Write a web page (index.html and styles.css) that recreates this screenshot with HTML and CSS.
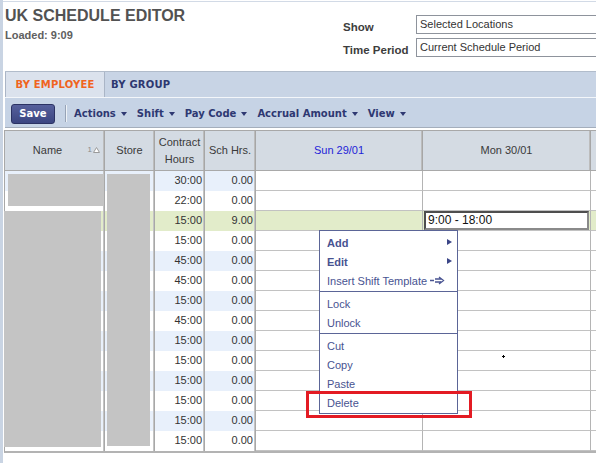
FILE: index.html
```html
<!DOCTYPE html>
<html>
<head>
<meta charset="utf-8">
<title>UK Schedule Editor</title>
<link rel="stylesheet" href="styles.css">
</head>
<body>
<div class="page">
  <div class="topline"></div>
  <header class="head">
    <div class="titles">
      <h1 class="title">UK SCHEDULE EDITOR</h1>
      <div class="loaded">Loaded: 9:09</div>
    </div>
    <div class="filters">
      <div class="frow"><span class="flabel">Show</span><div class="box">Selected Locations</div></div>
      <div class="frow"><span class="flabel">Time Period</span><div class="box">Current Schedule Period</div></div>
    </div>
  </header>

  <nav class="tabs">
    <div class="tab active">BY EMPLOYEE</div>
    <div class="tab">BY GROUP</div>
  </nav>

  <div class="toolbar">
    <button class="save">Save</button>
    <span class="tsep"></span>
    <span class="tmenu">Actions<i class="caret"></i></span>
    <span class="tmenu">Shift<i class="caret"></i></span>
    <span class="tmenu">Pay Code<i class="caret"></i></span>
    <span class="tmenu">Accrual Amount<i class="caret"></i></span>
    <span class="tmenu">View<i class="caret"></i></span>
  </div>

  <div class="grid">
    <div class="hrow">
      <div class="h hname">Name<span class="sort">1<svg width="7" height="6" viewBox="0 0 7 6"><path d="M3.5 0.5 L6.5 5.5 L0.5 5.5 Z" fill="#fff" stroke="#9a9a9a" stroke-width="1"/></svg></span></div>
      <div class="h">Store</div>
      <div class="h">Contract<br>Hours</div>
      <div class="h">Sch Hrs.</div>
      <div class="h today">Sun 29/01</div>
      <div class="h">Mon 30/01</div>
      <div class="h"></div>
    </div>
    <div class="row odd"><div class="c"></div><div class="c"></div><div class="c n">30:00</div><div class="c n">0.00</div><div class="d"></div><div class="d"></div><div class="d"></div></div>
    <div class="row"><div class="c"></div><div class="c"></div><div class="c n">22:00</div><div class="c n">0.00</div><div class="d"></div><div class="d"></div><div class="d"></div></div>
    <div class="row sel"><div class="c"></div><div class="c"></div><div class="c n">15:00</div><div class="c n">9.00</div><div class="d"></div><div class="d"><div class="edit">9:00 - 18:00</div></div><div class="d"></div></div>
    <div class="row"><div class="c"></div><div class="c"></div><div class="c n">15:00</div><div class="c n">0.00</div><div class="d"></div><div class="d"></div><div class="d"></div></div>
    <div class="row odd"><div class="c"></div><div class="c"></div><div class="c n">45:00</div><div class="c n">0.00</div><div class="d"></div><div class="d"></div><div class="d"></div></div>
    <div class="row"><div class="c"></div><div class="c"></div><div class="c n">45:00</div><div class="c n">0.00</div><div class="d"></div><div class="d"></div><div class="d"></div></div>
    <div class="row odd"><div class="c"></div><div class="c"></div><div class="c n">15:00</div><div class="c n">0.00</div><div class="d"></div><div class="d"></div><div class="d"></div></div>
    <div class="row"><div class="c"></div><div class="c"></div><div class="c n">45:00</div><div class="c n">0.00</div><div class="d"></div><div class="d"></div><div class="d"></div></div>
    <div class="row odd"><div class="c"></div><div class="c"></div><div class="c n">15:00</div><div class="c n">0.00</div><div class="d"></div><div class="d"></div><div class="d"></div></div>
    <div class="row"><div class="c"></div><div class="c"></div><div class="c n">15:00</div><div class="c n">0.00</div><div class="d"></div><div class="d"></div><div class="d"></div></div>
    <div class="row odd"><div class="c"></div><div class="c"></div><div class="c n">15:00</div><div class="c n">0.00</div><div class="d"></div><div class="d"></div><div class="d"></div></div>
    <div class="row"><div class="c"></div><div class="c"></div><div class="c n">15:00</div><div class="c n">0.00</div><div class="d"></div><div class="d"></div><div class="d"></div></div>
    <div class="row odd"><div class="c"></div><div class="c"></div><div class="c n">15:00</div><div class="c n">0.00</div><div class="d"></div><div class="d"></div><div class="d"></div></div>
    <div class="row"><div class="c"></div><div class="c"></div><div class="c n">15:00</div><div class="c n">0.00</div><div class="d"></div><div class="d"></div><div class="d"></div></div>
  </div>

  <div class="redact r1"></div>
  <div class="redact r2"></div>
  <div class="redact r3"></div>

  <div class="ctx">
    <div class="item bold">Add<i class="sub"></i></div>
    <div class="item bold">Edit<i class="sub"></i></div>
    <div class="item">Insert Shift Template<svg class="tpl" width="16" height="9" viewBox="0 0 16 9"><path d="M0 4.5 H4 M5 3 H11 M5 6 H11 M9 1 L13.5 4.5 L9 8" fill="none" stroke="#485391" stroke-width="1.3"/></svg></div>
    <div class="msep"></div>
    <div class="item">Lock</div>
    <div class="item">Unlock</div>
    <div class="msep"></div>
    <div class="item">Cut</div>
    <div class="item">Copy</div>
    <div class="item">Paste</div>
    <div class="item">Delete</div>
  </div>

  <div class="redbox"></div>
  <div class="cursor"></div>
</div>
</body>
</html>
```

FILE: styles.css
```css
body {
  margin: 0;
  background: #fff;
  font-family: "Liberation Sans", Arial, sans-serif;
}

.page {
  position: relative;
  width: 593px;
  height: 463px;
  border-left: 3px solid #c9d4e3;
  overflow: hidden;
}

.topline {
  height: 1px;
  margin-top: 1px;
  background: #d2dae6;
}

/* header */
.head {
  display: flex;
  height: 69px;
}
.titles {
  width: 338px;
  padding-left: 2px;
  flex: none;
}
.title {
  margin: 4px 0 0;
  font-size: 16px;
  line-height: 19px;
  font-weight: 700;
  color: #525252;
}
.loaded {
  margin-top: 4px;
  font-size: 11px;
  line-height: 13px;
  font-weight: 700;
  color: #606060;
}
.filters {
  padding-top: 13px;
}
.frow {
  display: flex;
  height: 19px;
}
.frow + .frow {
  margin-top: 4px;
}
.flabel {
  width: 73px;
  flex: none;
  padding-top: 5px;
  font-size: 11.5px;
  line-height: 14px;
  font-weight: 700;
  color: #3d3d3d;
}
.box {
  width: 220px;
  flex: none;
  border: 1px solid #8e939c;
  border-right: none;
  padding: 0 3px;
  font-size: 11px;
  line-height: 17px;
  color: #333;
  background: #fff;
}

/* tabs */
.tabs {
  display: flex;
  margin-left: 2px;
  height: 25px;
  background: #c8d4e5;
  border-top: 1px solid #b1bccb;
}
.tab {
  font-family: "DejaVu Sans", Verdana, sans-serif;
  font-size: 10px;
  font-weight: 700;
  line-height: 25px;
  letter-spacing: 0.2px;
  color: #2d3770;
  padding: 0 6px;
}
.tab.active {
  width: 100px;
  box-sizing: border-box;
  padding: 0;
  text-align: center;
  background: #dbe2ed;
  border-left: 1px solid #aab5c6;
  border-right: 1px solid #aab5c6;
  color: #f0641e;
}

/* toolbar */
.toolbar {
  display: flex;
  align-items: center;
  margin-left: 2px;
  height: 29px;
  padding-left: 6px;
  background: #c6d3e5;
  border-top: 1px solid #f3f6fa;
  border-bottom: 1px solid #a4aebc;
}
.save {
  width: 44px;
  height: 20px;
  padding: 0;
  margin: 2px 10px 0 0;
  border: 1px solid #2b3263;
  border-radius: 3px;
  background: linear-gradient(#56609c, #3b4581);
  color: #fff;
  font-family: "DejaVu Sans", Verdana, sans-serif;
  font-size: 10px;
  font-weight: 700;
}
.tsep {
  width: 1px;
  height: 17px;
  margin-top: 2px;
  background: #97a3b6;
  border-right: 1px solid #eef2f7;
  margin-right: 7px;
}
.tmenu {
  display: flex;
  align-items: center;
  margin-top: 2px;
  margin-right: 10px;
  font-family: "DejaVu Sans", Verdana, sans-serif;
  font-size: 10px;
  font-weight: 700;
  color: #2e3872;
}
.caret {
  margin-left: 5px;
  width: 0;
  height: 0;
  border-left: 3.5px solid transparent;
  border-right: 3.5px solid transparent;
  border-top: 4px solid #2e3872;
}

/* grid */
.grid {
  margin: 2px 0 0 1px;
  width: 640px;
  border-left: 1px solid #a8a8a8;
  border-top: 1px solid #a8a8a8;
  border-bottom: 2px solid #b3b3b3;
}
.hrow,
.row {
  display: grid;
  grid-template-columns: 100px 50px 50px 51px 167px 168px 40px;
}
.h {
  position: relative;
  height: 40px;
  box-sizing: border-box;
  display: flex;
  align-items: center;
  justify-content: center;
  text-align: center;
  background: #d4dbe3;
  border-right: 1px solid #a6a6a6;
  border-bottom: 1px solid #a9a9a9;
  box-shadow: inset -1px 0 0 #bcbcbc;
  font-size: 11px;
  line-height: 17px;
  color: #3a3a3a;
}
.hname {
  padding-right: 14px;
}
.h.today {
  color: #2323d8;
}
.sort {
  position: absolute;
  right: 4px;
  top: 15px;
  display: flex;
  align-items: center;
  gap: 1px;
  font-size: 8px;
  line-height: 8px;
  color: #8a8a8a;
}
.row > div {
  height: 20px;
  box-sizing: border-box;
  border-right: 1px solid #a8a8a8;
  background: #fff;
}
.row .c {
  box-shadow: inset -1px 0 0 #c4c4c4;
}
.row .n {
  text-align: right;
  padding-right: 2px;
  font-size: 11px;
  line-height: 18px;
  color: #333;
}
.row.odd .c {
  background: #e8f0fb;
}
.row .d {
  border-right-color: #b4b4b4;
  border-bottom: 1px solid #c2c2c2;
}
.row.sel > div {
  background: #e2ecca;
}
.edit {
  margin: 0 1px;
  height: 19px;
  box-sizing: border-box;
  border: 2px solid #4e4e4e;
  border-right-color: #8a8a8a;
  border-bottom-color: #8a8a8a;
  background: #fff;
  padding-left: 2px;
  font-size: 12px;
  line-height: 15px;
  color: #111;
}

/* redaction overlays */
.redact {
  position: absolute;
  background: #c4c4c4;
}
.r1 { left: 5px; top: 174px; width: 95px; height: 32px; }
.r2 { left: 1px; top: 211px; width: 97px; height: 236px; }
.r3 { left: 104px; top: 174px; width: 43px; height: 272px; }

/* context menu */
.ctx {
  position: absolute;
  left: 316px;
  top: 230px;
  width: 139px;
  box-sizing: border-box;
  padding: 2px 0 1px;
  background: #fff;
  border: 1px solid #5b6597;
}
.item {
  position: relative;
  display: flex;
  align-items: center;
  height: 19px;
  padding-left: 7px;
  font-size: 11px;
  color: #485391;
}
.item.bold {
  font-weight: 700;
}
.sub {
  position: absolute;
  right: 5px;
  top: 6px;
  width: 0;
  height: 0;
  border-top: 3.5px solid transparent;
  border-bottom: 3.5px solid transparent;
  border-left: 5px solid #3b4587;
}
.tpl {
  margin-left: 3px;
}
.msep {
  height: 1px;
  margin: 1px 0 2px;
  background: #5b6597;
}

.redbox {
  position: absolute;
  left: 303px;
  top: 391px;
  width: 166px;
  height: 27px;
  box-sizing: border-box;
  border: 3px solid #e31b23;
}
.cursor {
  position: absolute;
  left: 499px;
  top: 355px;
  width: 3px;
  height: 1px;
  margin-top: 1px;
  background: #000;
}
.cursor::after {
  content: "";
  position: absolute;
  left: 1px;
  top: -1px;
  width: 1px;
  height: 3px;
  background: #000;
}
```
